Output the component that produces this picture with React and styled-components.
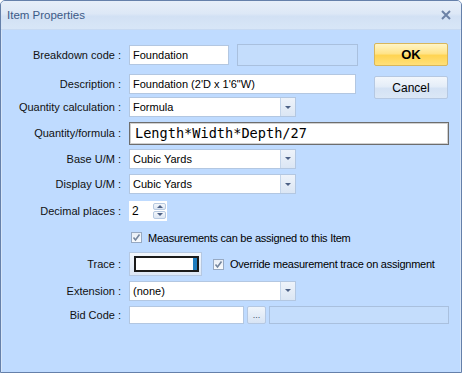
import React from 'react'
import styled, { createGlobalStyle } from 'styled-components'

const GlobalStyle = createGlobalStyle`
  body {
    margin: 0;
    font-family: 'Liberation Sans', Arial, sans-serif;
  }
`

const Window = styled.div`
  width: 462px;
  height: 373px;
  box-sizing: border-box;
  border: 1px solid #6580aa;
  border-radius: 5px 5px 0 0;
  background: #bfdbff;
  display: flex;
  flex-direction: column;
  overflow: hidden;
`

const TitleBar = styled.div`
  height: 28px;
  flex: none;
  display: flex;
  align-items: center;
  justify-content: space-between;
  padding: 0 10px 0 6px;
  background: linear-gradient(#e6eef9, #dde8f6 45%, #d2e1f4 55%, #d8e6f7);
  border-bottom: 1px solid #c8daf2;
`

const Title = styled.span`
  font-size: 11.5px;
  color: #3c5a86;
`

const Body = styled.div`
  flex: 1;
  padding-top: 11px;
  border-left: 1px solid #d6e5f8;
  border-right: 1px solid #d6e5f8;
`

const Row = styled.div`
  height: ${p => p.h || 26}px;
  display: grid;
  grid-template-columns: 120px 1fr;
  column-gap: 7px;
  align-items: center;
`

const Label = styled.div`
  font-size: 11px;
  color: #111;
  text-align: right;
  padding-right: 1px;
  white-space: nowrap;
`

const Field = styled.div`
  display: flex;
  align-items: center;
`

const TextBox = styled.div`
  box-sizing: border-box;
  width: ${p => p.w}px;
  height: ${p => p.h || 20}px;
  margin-left: ${p => p.ml || 0}px;
  border: 1px solid ${p => (p.disabled ? '#a9c0de' : '#b3c7e1')};
  background: ${p => (p.disabled ? '#c4ddfc' : '#fff')};
  font-size: 11px;
  color: #000;
  padding: 0 3px;
  display: flex;
  align-items: center;
  white-space: nowrap;
  overflow: hidden;
`

const FormulaBox = styled.div`
  box-sizing: border-box;
  width: 320px;
  height: 23px;
  border: 1px solid #6d6d6d;
  box-shadow: inset 0 0 0 1px #d0d0d0;
  background: #fff;
  font-family: 'DejaVu Sans Mono', monospace;
  font-size: 13.6px;
  color: #000;
  padding: 0 5px;
  display: flex;
  align-items: center;
`

const Combo = styled.div`
  box-sizing: border-box;
  width: ${p => p.w || 167}px;
  height: 20px;
  border: 1px solid #b3c7e1;
  background: #fff;
  display: flex;
`

const ComboText = styled.div`
  flex: 1;
  font-size: 11px;
  padding: 0 3px;
  display: flex;
  align-items: center;
`

const DropButton = styled.div`
  width: 14px;
  border-left: 1px solid #c4d5ea;
  background: linear-gradient(#eef3fa, #dbe6f4);
  display: flex;
  align-items: center;
  justify-content: center;
`

const Arrow = styled.span`
  width: 0;
  height: 0;
  border-left: 3px solid transparent;
  border-right: 3px solid transparent;
  border-top: 3px solid #4d6185;
  ${p => p.up && 'border-top: none; border-bottom: 3px solid #4d6185;'}
`

const SpinBox = styled.div`
  box-sizing: border-box;
  width: 38px;
  height: 20px;
  display: flex;
  background: #fff;
  border: 1px solid #fff;
`

const SpinText = styled.div`
  flex: 1;
  font-size: 12px;
  padding-left: 2px;
  display: flex;
  align-items: center;
`

const SpinButtons = styled.div`
  width: 13px;
  display: flex;
  flex-direction: column;
  gap: 1px;
  padding: 1px 0;
`

const SpinButton = styled.div`
  flex: 1;
  border: 1px solid #b7c9e0;
  border-radius: 2px;
  background: linear-gradient(#f4f7fb, #dce6f3);
  display: flex;
  align-items: center;
  justify-content: center;
`

const Button = styled.div`
  box-sizing: border-box;
  width: 74px;
  height: 23px;
  margin-left: ${p => p.ml}px;
  margin-top: ${p => p.mt || 0}px;
  border: 1px solid ${p => (p.primary ? '#d8b65b' : '#b5c8e2')};
  border-radius: 2px;
  background: ${p =>
    p.primary
      ? 'linear-gradient(#fff5c6, #ffe48a 45%, #ffd452 55%, #ffe07a)'
      : 'linear-gradient(#f3f7fc, #e4edf8 45%, #d4e2f4 55%, #dbe7f6)'};
  font-size: ${p => (p.primary ? 13 : 12)}px;
  font-weight: ${p => (p.primary ? 'bold' : 'normal')};
  color: #000;
  display: flex;
  align-items: center;
  justify-content: center;
`

const Check = styled.div`
  box-sizing: border-box;
  width: 11px;
  height: 11px;
  margin-left: ${p => p.ml || 0}px;
  border: 1px solid #97a9c2;
  background: linear-gradient(#e8eef6, #f9fbfd);
  display: flex;
  align-items: center;
  justify-content: center;
`

const CheckLabel = styled.span`
  font-size: 11px;
  letter-spacing: -0.25px;
  color: #000;
  margin-left: 6px;
  white-space: nowrap;
`

const TraceButton = styled.div`
  box-sizing: border-box;
  width: 73px;
  height: 24px;
  border: 1px solid #b5c8e2;
  background: linear-gradient(#f3f7fc, #dce7f6);
  padding: 3px 2px 3px 4px;
  display: flex;
`

const TraceSwatch = styled.div`
  flex: 1;
  border: 2px solid #1b1b1b;
  background: #fff;
  display: flex;
  justify-content: flex-end;
`

const TraceEdge = styled.div`
  width: 4px;
  background: #1f7dbf;
`

const DotsButton = styled.div`
  box-sizing: border-box;
  width: 19px;
  height: 18px;
  margin-left: 3px;
  border: 1px solid #b5c8e2;
  border-radius: 2px;
  background: linear-gradient(#f0f5fb, #d8e4f4);
  font-size: 9px;
  color: #3e4f6a;
  display: flex;
  align-items: flex-end;
  justify-content: center;
  padding-bottom: 3px;
  line-height: 1;
`

const CheckMark = () => (
  <svg width="9" height="9" viewBox="0 0 9 9">
    <path d="M1.5 4.5 L3.5 7 L7.5 1.5" fill="none" stroke="#75869e" strokeWidth="1.6" />
  </svg>
)

const CloseIcon = () => (
  <svg width="10" height="10" viewBox="0 0 10 10">
    <path d="M1 1 L9 9 M9 1 L1 9" stroke="#6c82a6" strokeWidth="2" />
  </svg>
)

const ComboField = ({ value, w }) => (
  <Combo w={w}>
    <ComboText>{value}</ComboText>
    <DropButton>
      <Arrow />
    </DropButton>
  </Combo>
)

export default function App() {
  return (
    <>
      <GlobalStyle />
      <Window>
        <TitleBar>
          <Title>Item Properties</Title>
          <CloseIcon />
        </TitleBar>
        <Body>
          <Row h={27}>
            <Label>Breakdown code :</Label>
            <Field>
              <TextBox w={100}>Foundation</TextBox>
              <TextBox w={121} ml={8} h={22} disabled />
              <Button primary ml={16}>OK</Button>
            </Field>
          </Row>
          <Row>
            <Label>Description :</Label>
            <Field>
              <TextBox w={227}>Foundation (2'D x 1'6"W)</TextBox>
              <Button ml={18} mt={8}>Cancel</Button>
            </Field>
          </Row>
          <Row>
            <Label>Quantity calculation :</Label>
            <Field>
              <ComboField value="Formula" />
            </Field>
          </Row>
          <Row>
            <Label>Quantity/formula :</Label>
            <Field>
              <FormulaBox>Length*Width*Depth/27</FormulaBox>
            </Field>
          </Row>
          <Row h={25}>
            <Label>Base U/M :</Label>
            <Field>
              <ComboField value="Cubic Yards" />
            </Field>
          </Row>
          <Row>
            <Label>Display U/M :</Label>
            <Field>
              <ComboField value="Cubic Yards" />
            </Field>
          </Row>
          <Row h={27}>
            <Label>Decimal places :</Label>
            <Field>
              <SpinBox>
                <SpinText>2</SpinText>
                <SpinButtons>
                  <SpinButton><Arrow up /></SpinButton>
                  <SpinButton><Arrow /></SpinButton>
                </SpinButtons>
              </SpinBox>
            </Field>
          </Row>
          <Row h={27}>
            <Label />
            <Field>
              <Check ml={2}><CheckMark /></Check>
              <CheckLabel>Measurements can be assigned to this Item</CheckLabel>
            </Field>
          </Row>
          <Row>
            <Label>Trace :</Label>
            <Field>
              <TraceButton>
                <TraceSwatch>
                  <TraceEdge />
                </TraceSwatch>
              </TraceButton>
              <Check ml={11}><CheckMark /></Check>
              <CheckLabel>Override measurement trace on assignment</CheckLabel>
            </Field>
          </Row>
          <Row h={27}>
            <Label>Extension :</Label>
            <Field>
              <ComboField value="(none)" />
            </Field>
          </Row>
          <Row h={22}>
            <Label>Bid Code :</Label>
            <Field>
              <TextBox w={115} h={18} />
              <DotsButton>...</DotsButton>
              <TextBox w={180} h={18} ml={3} disabled />
            </Field>
          </Row>
        </Body>
      </Window>
    </>
  )
}
